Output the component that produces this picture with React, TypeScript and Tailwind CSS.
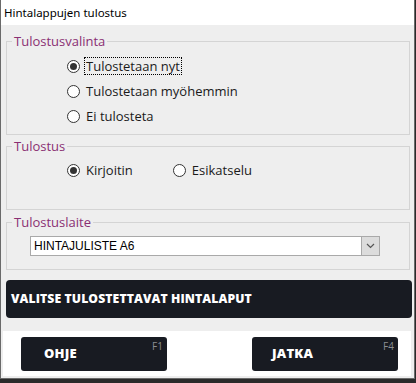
import React from "react";

function Radio({ checked, label, focus }: { checked?: boolean; label: string; focus?: boolean }) {
  return (
    <div className="flex items-center h-[20px]">
      <span className="w-[13px] h-[13px] rounded-full border border-[#333333] bg-white flex items-center justify-center shrink-0">
        {checked && <span className="w-[7px] h-[7px] rounded-full bg-[#333333]" />}
      </span>
      <span
        className={
          "ml-[5px] text-[13px] text-[#1a1a1a] leading-[16px] px-[1px] " +
          (focus ? "outline outline-1 outline-dotted outline-black" : "")
        }
      >
        {label}
      </span>
    </div>
  );
}

function Legend({ children }: { children: React.ReactNode }) {
  return (
    <legend className="ml-[5px] px-[2px] text-[13px] leading-[16px] text-[#8a2f73]">{children}</legend>
  );
}

function FButton({ label, fkey, pad }: { label: string; fkey: string; pad: string }) {
  return (
    <div className={"relative w-[146px] h-[34px] bg-[#181b22] rounded-[3px] flex items-center " + pad}>
      <span className="text-white font-extrabold text-[13px] tracking-[0.2px]">{label}</span>
      <span className="absolute top-[2px] right-[4px] text-[10px] text-[#8a8d93]">{fkey}</span>
    </div>
  );
}

export default function App() {
  return (
    <div
      className="w-[416px] h-[383px] bg-[#2a2a2a] flex flex-col"
      style={{ fontFamily: '"Open Sans", "Noto Sans", sans-serif' }}
    >
      <div className="w-[415px] h-[379px] bg-[#eeeeee] border-l border-r border-b border-[#6a6a6a] flex flex-col">
        <div className="h-[25px] bg-white flex items-center pl-[3px] text-[11.5px] text-black shrink-0" style={{ fontFamily: '"Noto Sans", sans-serif' }}>
          Hintalappujen tulostus
        </div>
        <div className="flex flex-col px-[5px]">
          <fieldset className="mt-[8px] h-[102px] border border-[#d4d4d4] w-[404px]">
            <Legend>Tulostusvalinta</Legend>
            <div className="flex flex-col gap-[5px] pl-[60px] pt-[7px]">
              <Radio checked label="Tulostetaan nyt" focus />
              <Radio label="Tulostetaan myöhemmin" />
              <Radio label="Ei tulosteta" />
            </div>
          </fieldset>
          <fieldset className="mt-[3px] h-[72px] border border-[#d4d4d4] w-[404px]">
            <Legend>Tulostus</Legend>
            <div className="flex pl-[60px] pt-[6px] gap-[39px]">
              <Radio checked label="Kirjoitin" />
              <Radio label="Esikatselu" />
            </div>
          </fieldset>
          <fieldset className="mt-[4px] h-[56px] border border-[#d4d4d4] w-[404px]">
            <Legend>Tulostuslaite</Legend>
            <div className="pl-[23px] pt-[6px]">
              <div className="w-[350px] h-[20px] border border-[#a9a9a9] bg-white flex">
                <div
                  className="flex-1 flex items-center pl-[3px] text-[12px] text-black"
                  style={{ fontFamily: '"Liberation Sans", Arial, sans-serif' }}
                >
                  HINTAJULISTE A6
                </div>
                <div className="w-[18px] h-full bg-[#dcdcdc] border-l border-[#a9a9a9] flex items-center justify-center">
                  <svg width="9" height="6" viewBox="0 0 9 6">
                    <path d="M1 1 L4.5 4.5 L8 1" stroke="#555" strokeWidth="1.2" fill="none" />
                  </svg>
                </div>
              </div>
            </div>
          </fieldset>
          <div className="mt-[10px] w-[406px] h-[38px] bg-[#181b22] rounded-[4px] flex items-center pl-[5px]">
            <span className="text-white font-extrabold text-[12.2px] tracking-[0.1px]">VALITSE TULOSTETTAVAT HINTALAPUT</span>
          </div>
        </div>
        <div className="mt-[13px] ml-[2px] w-[408px] h-[45px] bg-white flex items-center justify-between pl-[18px] pr-[13px]">
          <FButton label="OHJE" fkey="F1" pad="pl-[23px]" />
          <FButton label="JATKA" fkey="F4" pad="pl-[20px]" />
        </div>
      </div>
    </div>
  );
}
